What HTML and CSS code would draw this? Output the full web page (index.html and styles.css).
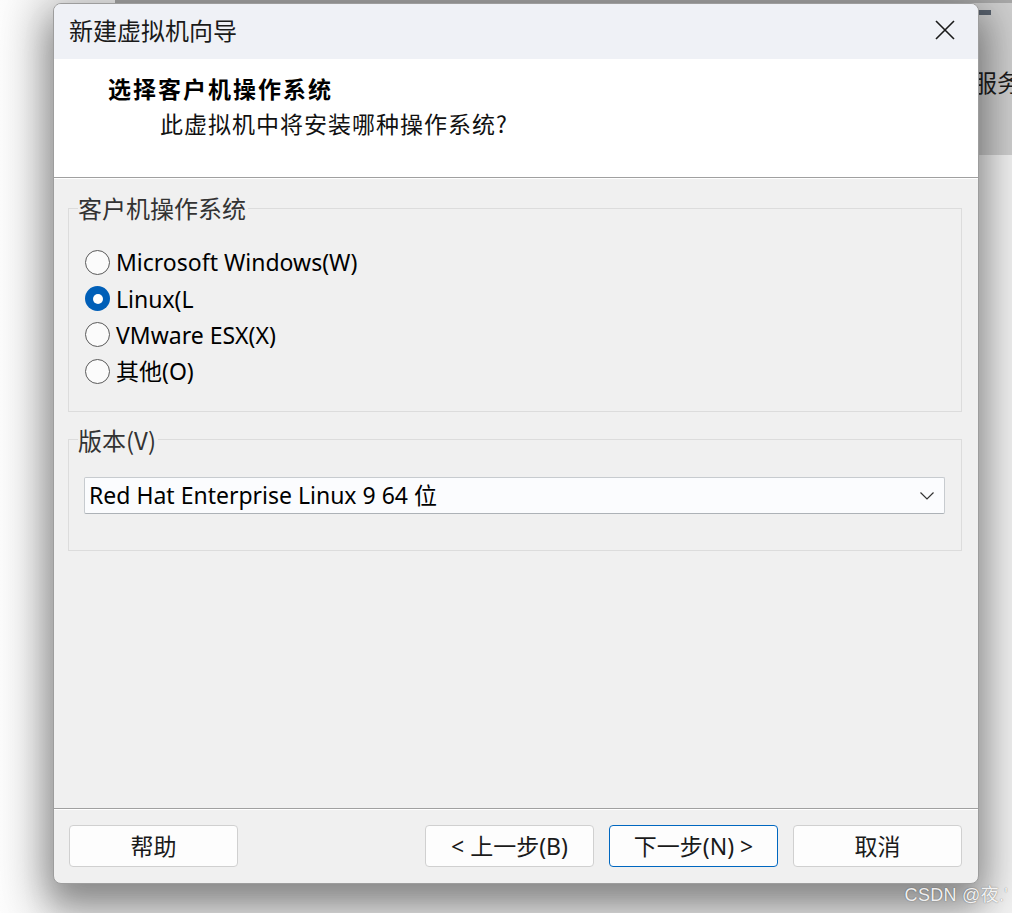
FILE: index.html
```html
<!DOCTYPE html>
<html lang="zh-CN">
<head>
<meta charset="utf-8">
<title>新建虚拟机向导</title>
<link rel="stylesheet" href="styles.css">
</head>
<body>
<div class="desktop">
  <div class="bgwin">
    <span class="bgwin-bar"></span>
    <span class="bgwin-text">服务</span>
  </div>

  <div class="dialog">
    <div class="titlebar">
      <span class="title">新建虚拟机向导</span>
      <svg class="close" width="20" height="20" viewBox="0 0 20 20" aria-hidden="true">
        <path d="M1 1 L19 19 M19 1 L1 19" stroke="#1a1a1a" stroke-width="1.6" fill="none"/>
      </svg>
    </div>

    <div class="header">
      <div class="header-title">选择客户机操作系统</div>
      <div class="header-sub">此虚拟机中将安装哪种操作系统?</div>
    </div>

    <div class="content">
      <fieldset class="group group-os">
        <legend class="legend">客户机操作系统</legend>
        <div class="radio-row"><span class="radio"></span><span class="radio-label">Microsoft Windows(W)</span></div>
        <div class="radio-row"><span class="radio radio-checked"></span><span class="radio-label">Linux(L</span></div>
        <div class="radio-row"><span class="radio"></span><span class="radio-label">VMware ESX(X)</span></div>
        <div class="radio-row"><span class="radio"></span><span class="radio-label">其他(O)</span></div>
      </fieldset>

      <fieldset class="group group-ver">
        <legend class="legend">版本(V)</legend>
        <div class="select">
          <span class="select-text">Red Hat Enterprise Linux 9 64 位</span>
          <svg class="chevron" width="14" height="8" viewBox="0 0 14 8" aria-hidden="true">
            <path d="M0.5 0.5 L7 7 L13.5 0.5" stroke="#333" stroke-width="1.2" fill="none"/>
          </svg>
        </div>
      </fieldset>
    </div>

    <div class="footer">
      <button class="btn">帮助</button>
      <div class="footer-right">
        <button class="btn">&lt; 上一步(B)</button>
        <button class="btn btn-primary">下一步(N) &gt;</button>
        <button class="btn">取消</button>
      </div>
    </div>
  </div>

  <div class="watermark">CSDN @夜.'</div>
</div>
</body>
</html>
```

FILE: styles.css
```css
* { box-sizing: border-box; }

html, body {
  margin: 0;
  padding: 0;
}

body {
  width: 1012px;
  height: 913px;
  overflow: hidden;
  background: #f4f4f4;
  font-family: "Noto Sans", "Noto Sans CJK SC", sans-serif;
  color: #111;
}

.desktop {
  position: relative;
  width: 1012px;
  height: 913px;
  padding: 3px 0 0 53px;
  background: linear-gradient(to right, #fdfdfd 0, #f3f3f3 60px);
}

/* background window peeking out behind the dialog */
.bgwin {
  position: absolute;
  left: 115px;
  top: 0;
  right: 0;
  height: 155px;
  background: #d0d0d0;
  border-top: 3px solid #a9a9a9;
}

.bgwin-bar {
  position: absolute;
  left: 860px;
  top: 7px;
  width: 16px;
  height: 5px;
  background: #5b6470;
}

.bgwin-text {
  position: absolute;
  left: 858px;
  top: 62px;
  white-space: nowrap;
  font-family: "Noto Sans CJK SC", sans-serif;
  font-size: 24px;
  line-height: 34px;
  color: #1e1e1e;
}

.dialog {
  position: relative;
  width: 926px;
  height: 881px;
  display: flex;
  flex-direction: column;
  background: #f0f0f0;
  border: 1px solid #9d9d9d;
  border-radius: 8px;
  overflow: hidden;
  box-shadow: 0 12px 45px 10px rgba(0, 0, 0, 0.34), 0 22px 30px 0 rgba(0, 0, 0, 0.18);
}

.titlebar {
  height: 55px;
  flex: none;
  display: flex;
  align-items: center;
  justify-content: space-between;
  padding: 0 23px 3px 15px;
  background: #eff1f6;
}

.title {
  font-family: "Noto Sans CJK SC", sans-serif;
  font-size: 24px;
  line-height: 32px;
  color: #1a1a1a;
}

.close { display: block; }

.header {
  height: 119px;
  flex: none;
  background: #ffffff;
  border-bottom: 1px solid #a0a0a0;
  padding-top: 12px;
}

.header-title {
  padding-left: 54px;
  font-family: "Noto Sans CJK SC", sans-serif;
  font-weight: 700;
  font-size: 23px;
  letter-spacing: 2px;
  line-height: 34px;
  color: #000;
}

.header-sub {
  margin-top: 1px;
  padding-left: 106px;
  font-family: "Noto Sans CJK SC", sans-serif;
  font-size: 23px;
  letter-spacing: 1px;
  line-height: 34px;
  color: #111;
}

.content {
  flex: 1;
  padding: 0 16px 0 14px;
  box-shadow: inset 0 1px 0 #ffffff;
}

.group {
  margin: 0;
  min-width: 0;
  border: 1px solid #dcdcdc;
  padding: 0 16px 0 15px;
}

.legend {
  padding: 0 2px 0 0;
  margin-left: -6px;
  font-family: "Noto Sans CJK SC", sans-serif;
  font-size: 24px;
  line-height: 28px;
  color: #333;
}

.group-os {
  margin-top: 16px;
  padding-top: 22px;
  padding-bottom: 21px;
}

.group-ver {
  margin-top: 14px;
  padding-top: 23px;
  padding-bottom: 36px;
}

.radio-row {
  display: flex;
  align-items: center;
  height: 36.4px;
  margin-left: 1px;
}

.radio {
  width: 25px;
  height: 25px;
  flex: none;
  border-radius: 50%;
  border: 1.5px solid #5a5a5a;
  background: #fbfbfb;
  margin-right: 6px;
  position: relative;
}

.radio-checked {
  border: none;
  background: #005fb8;
}

.radio-checked::after {
  content: "";
  position: absolute;
  left: 50%;
  top: 50%;
  width: 10px;
  height: 10px;
  margin: -5px 0 0 -5px;
  border-radius: 50%;
  background: #ffffff;
}

.radio-label {
  font-size: 23px;
  line-height: 30px;
  color: #000;
}

.select {
  height: 37px;
  display: flex;
  align-items: center;
  justify-content: space-between;
  padding: 0 10px 0 4px;
  background: #fbfcfe;
  border: 1px solid #c7cbcf;
  border-bottom-color: #adb2b7;
  border-radius: 2px;
}

.select-text {
  font-size: 23px;
  line-height: 30px;
  color: #000;
}

.chevron { display: block; margin-top: 1px; }

.footer {
  flex: none;
  display: flex;
  justify-content: space-between;
  padding: 16px 16px 16px 15px;
  border-top: 1px solid #a0a0a0;
  box-shadow: inset 0 1px 0 #ffffff;
}

.footer-right {
  display: flex;
  gap: 15px;
}

.btn {
  width: 169px;
  height: 42px;
  margin: 0;
  padding: 0;
  background: #fdfdfd;
  border: 1px solid #d0d0d0;
  border-radius: 4px;
  font-family: "Noto Sans", "Noto Sans CJK SC", sans-serif;
  font-size: 23px;
  line-height: 30px;
  color: #1a1a1a;
}

.btn-primary {
  border-color: #0067c0;
}

.watermark {
  position: absolute;
  right: 4px;
  bottom: 8px;
  font-family: "Liberation Sans", "Noto Sans CJK SC", sans-serif;
  font-size: 18px;
  letter-spacing: 0.3px;
  line-height: 20px;
  color: rgba(255, 255, 255, 0.92);
  text-shadow: 0 0 1px rgba(0, 0, 0, 0.4), 0 0 2px rgba(0, 0, 0, 0.15);
}
```
